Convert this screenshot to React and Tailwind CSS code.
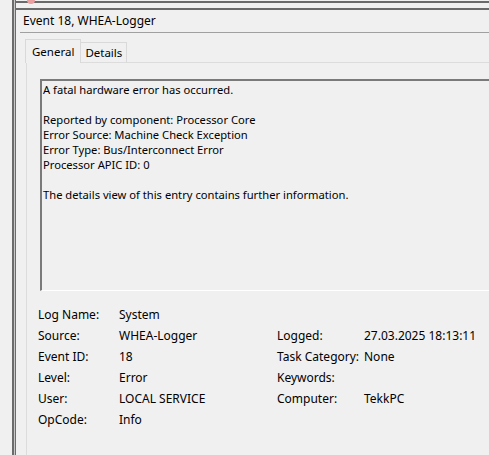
export default function App() {
    const left = [
        ['Log Name:', 'System'],
        ['Source:', 'WHEA-Logger'],
        ['Event ID:', '18'],
        ['Level:', 'Error'],
        ['User:', 'LOCAL SERVICE'],
        ['OpCode:', 'Info'],
    ];
    const right = [
        null,
        ['Logged:', '27.03.2025 18:13:11'],
        ['Task Category:', 'None'],
        ['Keywords:', ''],
        ['Computer:', 'TekkPC'],
        null,
    ];

    return (
        <div className="w-[489px] h-[455px] bg-[#f0f0f0] text-black text-[12px] flex overflow-hidden" style={{ fontFamily: '"Noto Sans", "Open Sans", sans-serif' }}>
            {/* window edge on the left */}
            <div className="w-[12px] shrink-0" />
            <div className="w-[4px] shrink-0 border-l-2 border-r border-[#6b6b6b] bg-[#c8c8c8]" />

            <div className="flex-1 flex flex-col min-w-0">
                {/* top frame strip */}
                <div className="relative h-[10px] pt-[1px] shrink-0">
                    <div className="h-[9px] border-t-2 border-b-2 border-[#6a6a6a]" />
                    <div className="absolute left-[11px] top-0 w-[8px] h-[4px] rounded-b-sm bg-[#e8a0a0]" />
                </div>

                {/* title */}
                <div className="ml-[4px] pl-[3px] h-[23px] flex items-center border-b border-[#a0a0a0] shrink-0">
                    <span className="leading-none">Event 18, WHEA-Logger</span>
                </div>

                {/* tabs */}
                <div className="ml-[9px] mt-[6px] flex items-end shrink-0 text-[11.5px]">
                    <div className="h-[24px] px-[6px] flex items-center bg-[#f0f0f0] border border-b-0 border-[#d9d9d9] -mb-px relative z-10">General</div>
                    <div className="h-[20px] px-[4px] flex items-center border border-l-0 border-b-0 border-[#d9d9d9]">Details</div>
                </div>

                {/* tab panel */}
                <div className="ml-[10px] flex-1 border-t border-l border-[#dcdcdc] pl-[13px] pt-[16px]">
                    <div className="w-[600px] h-[212px] border-t-2 border-l-2 border-[#7a7a7a] border-b border-b-white pl-[1px] pt-[1px] text-[11.2px] leading-[15px]">
                        <p>A fatal hardware error has occurred.</p>
                        <p>&nbsp;</p>
                        <p>Reported by component: Processor Core</p>
                        <p>Error Source: Machine Check Exception</p>
                        <p>Error Type: Bus/Interconnect Error</p>
                        <p>Processor APIC ID: 0</p>
                        <p>&nbsp;</p>
                        <p>The details view of this entry contains further information.</p>
                    </div>

                    <div className="mt-[13px] -ml-[2px] grid grid-cols-[81px_158px_87px_1fr] leading-[21px]">
                        {left.map((row, i) => (
                            <div key={i} className="contents">
                                <div>{row[0]}</div>
                                <div>{row[1]}</div>
                                <div className="whitespace-nowrap">{right[i] ? right[i][0] : ''}</div>
                                <div className="whitespace-nowrap">{right[i] ? right[i][1] : ''}</div>
                            </div>
                        ))}
                    </div>
                </div>
            </div>
        </div>
    );
}
